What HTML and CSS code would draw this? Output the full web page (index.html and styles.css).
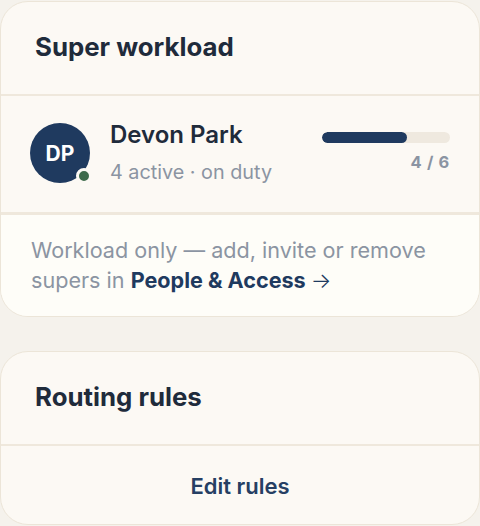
FILE: index.html
```html
<!DOCTYPE html>
<html>
<head>
<meta charset="utf-8">
<link rel="stylesheet" href="styles.css">
</head>
<body>
<div class="stack">
  <section class="card">
    <header class="card-head"><h2 class="title">Super workload</h2></header>
    <div class="row">
      <div class="avatar">DP<span class="dot"></span></div>
      <div class="info">
        <div class="name">Devon Park</div>
        <div class="sub">4 active · on duty</div>
      </div>
      <div class="load">
        <div class="bar"><div class="fill" style="width:66.7%"></div></div>
        <div class="count">4 / 6</div>
      </div>
    </div>
    <div class="note">Workload only — add, invite or remove supers in <a class="link">People &amp; Access <span class="arrow">→</span></a></div>
  </section>
  <section class="card">
    <header class="card-head"><h2 class="title">Routing rules</h2></header>
    <div class="action">Edit rules</div>
  </section>
</div>
</body>
</html>
```
FILE: styles.css
```css
* { box-sizing: border-box; }
html, body { margin: 0; padding: 0; }
body {
  background: #f5f2ec;
  font-family: Inter, "Noto Sans", sans-serif;
  font-optical-sizing: none;
  color: #1f2b3b;
}
.stack {
  display: flex;
  flex-direction: column;
  gap: 34px;
  padding-top: 1px;
}
.card {
  background: #fcf9f4;
  border: 1.5px solid #ece5d8;
  border-radius: 28px;
  overflow: hidden;
}
.card-head {
  padding: 29px 34px 31px;
  border-bottom: 2.5px solid #efe8dc;
}
.title {
  margin: 0;
  font-size: 25.8px;
  line-height: 32px;
  font-weight: 700;
  color: #1f2b3b;
}
.row {
  display: flex;
  align-items: flex-start;
  padding: 27px 29px 28px;
  gap: 20px;
  border-bottom: 3px solid #efe8dc;
}
.avatar {
  position: relative;
  width: 60px;
  height: 60px;
  border-radius: 50%;
  background: #1f3a5f;
  color: #fff;
  font-weight: 700;
  font-size: 21px;
  display: flex;
  align-items: center;
  justify-content: center;
  flex: none;
}
.dot {
  position: absolute;
  right: -2px;
  bottom: -1px;
  width: 16px;
  height: 16px;
  border-radius: 50%;
  background: #3e6b4b;
  border: 3px solid #fcf9f4;
}
.info { flex: 1; display: flex; flex-direction: column; gap: 11.5px; margin-top: -2.3px; }
.name { font-size: 24px; font-weight: 600; line-height: 28px; color: #1f2b3b; }
.sub { font-size: 19.8px; line-height: 24px; color: #8b94a2; }
.load { width: 128px; display: flex; flex-direction: column; align-items: flex-end; gap: 9px; margin-top: 8.5px; }
.bar { width: 100%; height: 11px; border-radius: 6px; background: #efe9df; overflow: hidden; }
.fill { height: 100%; background: #1f3a5f; border-radius: 6px; }
.count { font-size: 16.5px; font-weight: 700; color: #8b94a2; line-height: 20px; letter-spacing: 0.04em; }
.note {
  background: #fefdf8;
  padding: 20px 30px 21px;
  font-size: 21.6px;
  line-height: 30px;
  color: #8b94a2;
}
.link { color: #1f3a5f; font-weight: 700; }
.arrow { font-weight: 300; }
.action {
  padding: 26px 24px 24px;
  text-align: center;
  font-size: 22px;
  font-weight: 600;
  color: #263f63;
  line-height: 28px;
}
```
